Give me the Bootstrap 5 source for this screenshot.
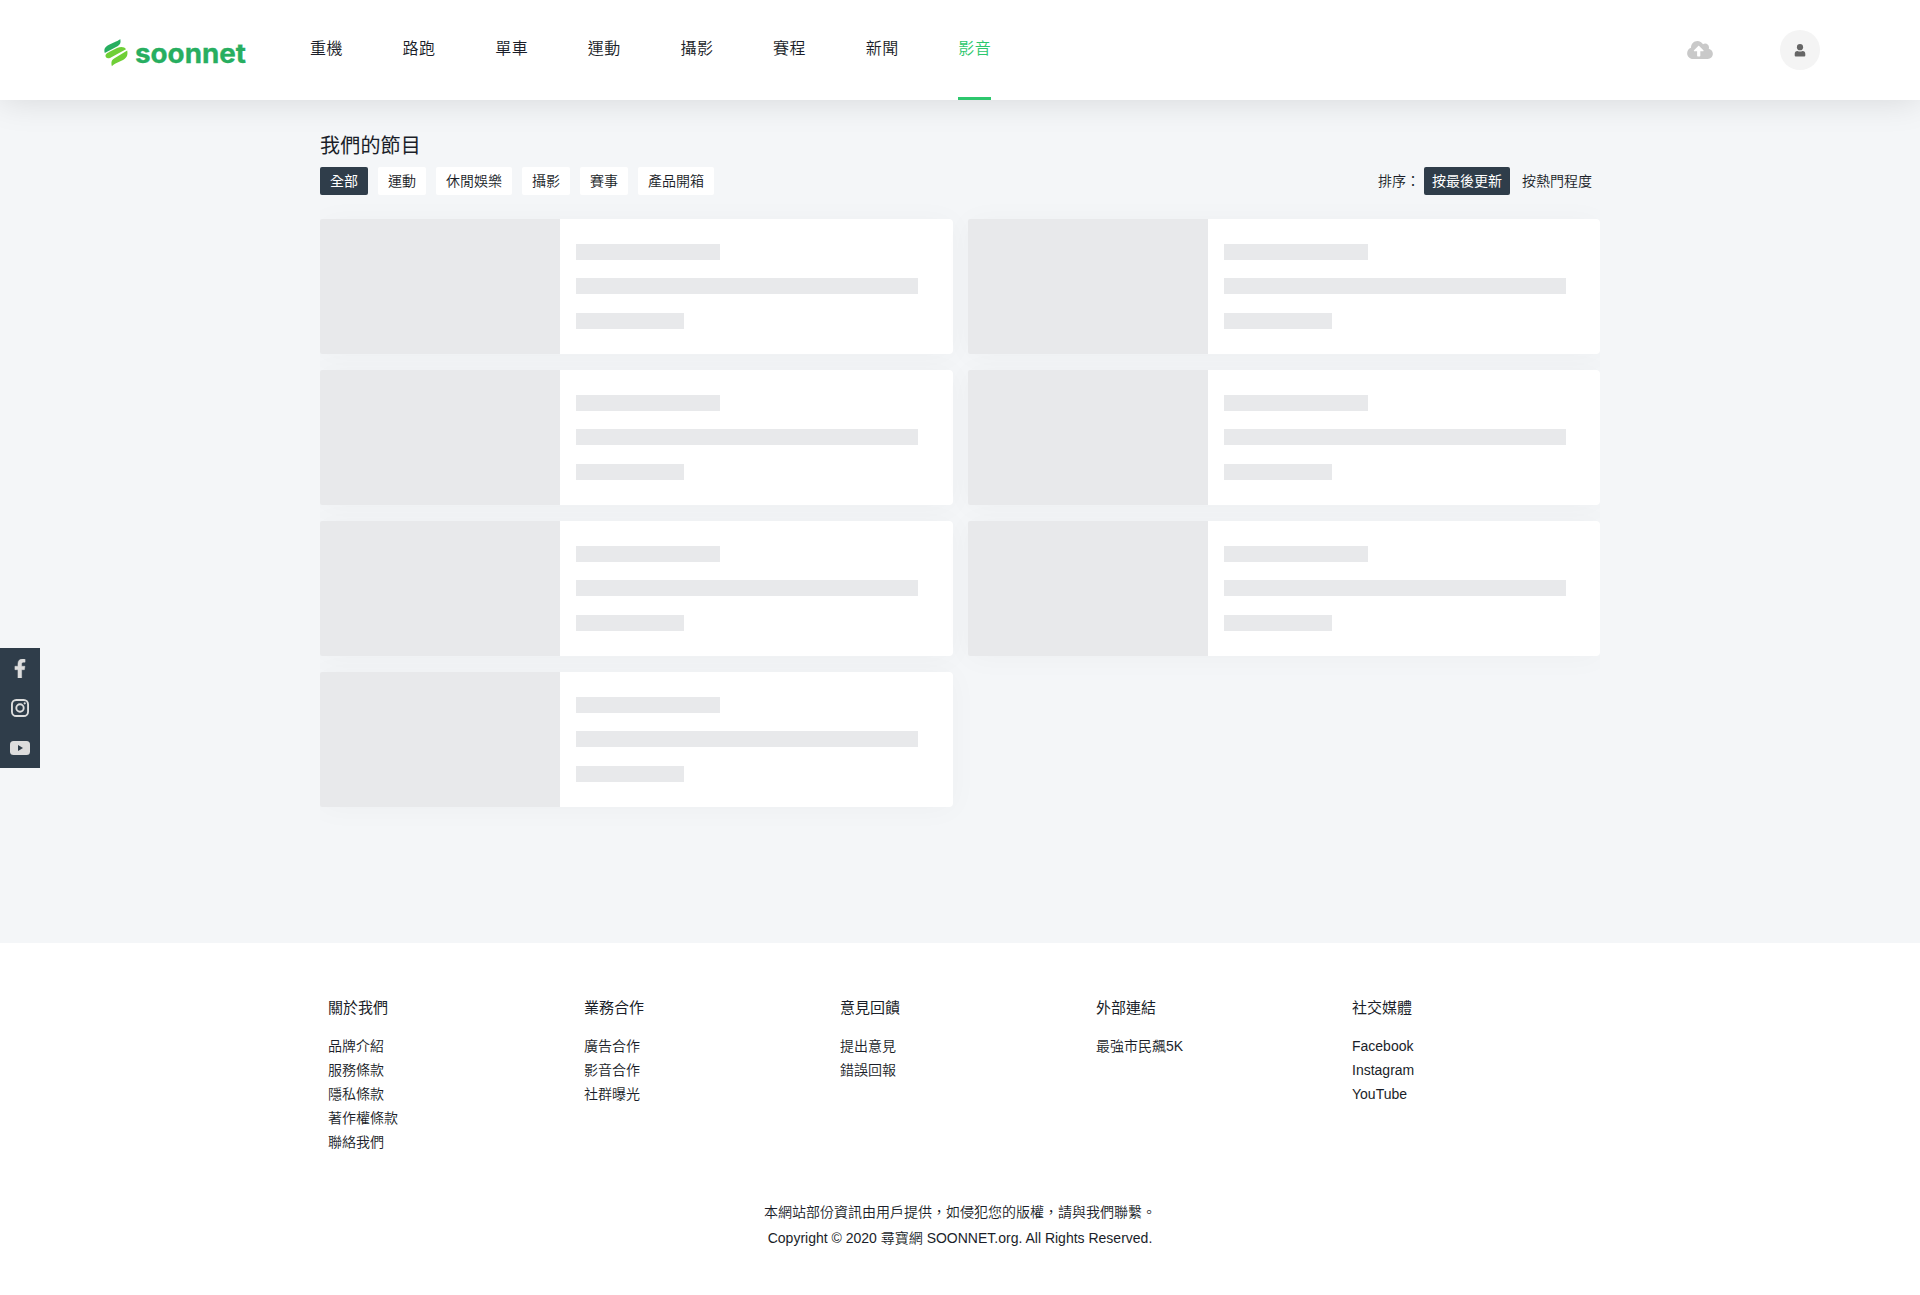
<!DOCTYPE html>
<html lang="zh-Hant">
<head>
<meta charset="utf-8">
<meta name="viewport" content="width=device-width, initial-scale=1">
<title>soonnet 影音</title>
<link href="https://cdn.jsdelivr.net/npm/bootstrap@5.3.0/dist/css/bootstrap.min.css" rel="stylesheet">
<style>
body{font-family:"Liberation Sans","Noto Sans CJK TC",sans-serif;font-size:14px;line-height:24px;color:#1a1e29;background:#f4f6f8;font-weight:350}
a{color:inherit;text-decoration:none}
.site-header{height:100px;background:#fff;box-shadow:0 0 35px rgba(0,0,0,.13);padding:0 100px 0 103px;z-index:5}
.brand-logo{width:146px;height:40px;margin-top:1px}
.main-menu{gap:59.6px;margin-left:61px;height:100px}
.main-menu .nav-link{padding:0;height:100px;line-height:98px;font-size:16px;letter-spacing:.5px;color:#1a1e29;border-bottom:3px solid transparent}
.main-menu .nav-link.active{color:#2dc76d;border-color:#2dc76d}
.header-tools{gap:67px}
.user-btn{width:40px;height:40px;background:#f4f4f4}
.wrap{width:1280px;margin:0 auto}
.show-area{min-height:843px;padding-top:31px;overflow:hidden}
.page-title{font-size:20px;line-height:30px;font-weight:400;letter-spacing:.2px;margin:0 0 6px}
.chip{height:28px;line-height:28px;padding:0 10px;background:#fff;border-radius:2px;display:block}
.chip.plain{background:transparent;padding:0 8px}
.chip.on,.chip.plain.on{background:#2f3d4a;color:#fff;font-weight:400}
.show-grid{display:grid;grid-template-columns:1fr 1fr;gap:16px 15px;padding:24px 0 60px;overflow:hidden}
.show-item{height:135px;background:#fff;border-radius:4px;box-shadow:0 2px 30px rgba(0,0,0,.03)}
.show-thumb{width:240px;background:#e8e9eb;border-radius:2px 0 0 2px}
.show-body{padding:25px 16px 0}
.bar{height:16px;background:#e8e9eb}
.bar-a{width:144px;margin-bottom:18px}.bar-b{width:342px;margin-bottom:19px}.bar-c{width:108px}
.social-rail{left:0;top:648px;width:40px;background:#2f3d4a;z-index:6}
.social-rail a{height:40px}
.site-footer{background:#fff;height:352px;padding-top:53px}
.foot-col{width:256px;padding:0 8px}
.foot-col h2{font-size:15px;line-height:24px;margin:0 0 14px;font-weight:400}
.foot-cols{height:203px}
.legal{line-height:26px}
</style>
</head>
<body>
<header class="site-header d-flex align-items-center position-relative">
  <a href="#" class="brand-logo d-block"><svg class="d-block" width="146" height="40" viewBox="0 0 146 40">
    <path fill="#27ae60" d="M17.200 8C18 11.500 17.500 13.500 14.500 15.200L1.800 22C.5 17.500 2.500 15.500 6.500 13.500L13 10.600C15 9.700 16.300 9 17.200 8Z"/>
    <path fill="#6fcf36" d="M3.200 26.500C1.500 24 3 22.500 6.500 20.700L14 17C18 15.300 21.500 15.700 23 18.300L7 26.900C5.500 27.500 4 27.400 3.200 26.500Z"/>
    <path fill="#6fcf36" d="M24.200 19.500C25.200 24.500 23.500 27.200 19.500 29.200L13 32.200C11 33.200 9.800 34 8.900 35.300C8 31.500 8.300 29 11.500 27.200Z"/>
    <text x="32" y="31.500" font-family="Inter,sans-serif" font-weight="700" font-size="26" fill="#27ae60" stroke="#27ae60" stroke-width=".3" textLength="111" lengthAdjust="spacingAndGlyphs">soonnet</text>
  </svg></a>
  <nav class="main-menu nav flex-nowrap">
    <a class="nav-link" href="#">重機</a><a class="nav-link" href="#">路跑</a><a class="nav-link" href="#">單車</a><a class="nav-link" href="#">運動</a><a class="nav-link" href="#">攝影</a><a class="nav-link" href="#">賽程</a><a class="nav-link" href="#">新聞</a><a class="nav-link active" href="#">影音</a>
  </nav>
  <div class="header-tools ms-auto d-flex align-items-center">
    <a href="#" class="d-flex"><svg width="26" height="18" viewBox="0 32 640 448" fill="#c9c9c9"><path d="M537.600 226.600c4.100-10.700 6.400-22.400 6.400-34.600 0-53-43-96-96-96-19.700 0-38.100 6-53.300 16.200C367 64.200 315.300 32 256 32c-88.400 0-160 71.600-160 160 0 2.700.1 5.400.2 8.100C40.200 219.800 0 273.200 0 336c0 79.500 64.500 144 144 144h368c70.700 0 128-57.300 128-128 0-61.900-44-113.600-102.400-125.400zM393.400 288H328v112c0 8.800-7.200 16-16 16h-48c-8.800 0-16-7.200-16-16V288h-65.400c-14.300 0-21.400-17.200-11.300-27.300l105.400-105.400c6.200-6.200 16.400-6.200 22.600 0l105.400 105.400c10.100 10.100 2.900 27.300-11.300 27.300z"/></svg></a>
    <a href="#" class="user-btn rounded-circle d-flex align-items-center justify-content-center"><svg width="12" height="13" viewBox="0 0 12 13" fill="#666"><circle cx="6" cy="3.200" r="3.100"/><path d="M.7 11.500V10Q.7 7 3.500 7Q6 8 8.500 7Q11.300 7 11.300 10V11.500Q11.300 12.500 10.300 12.500H1.700Q.7 12.500 .7 11.500Z"/></svg></a>
  </div>
</header>
<main class="show-area">
  <div class="wrap">
    <h1 class="page-title">我們的節目</h1>
    <div class="d-flex justify-content-between">
      <div class="d-flex" style="gap:10px">
        <a href="#" class="chip on">全部</a><a href="#" class="chip">運動</a><a href="#" class="chip">休閒娛樂</a><a href="#" class="chip">攝影</a><a href="#" class="chip">賽事</a><a href="#" class="chip">產品開箱</a>
      </div>
      <div class="d-flex gap-1"><span class="chip plain px-0">排序：</span><a href="#" class="chip plain on">按最後更新</a><a href="#" class="chip plain">按熱門程度</a></div>
    </div>
    <div class="show-grid">
      <div class="show-item d-flex"><div class="show-thumb"></div><div class="show-body"><div class="bar bar-a"></div><div class="bar bar-b"></div><div class="bar bar-c"></div></div></div>
      <div class="show-item d-flex"><div class="show-thumb"></div><div class="show-body"><div class="bar bar-a"></div><div class="bar bar-b"></div><div class="bar bar-c"></div></div></div>
      <div class="show-item d-flex"><div class="show-thumb"></div><div class="show-body"><div class="bar bar-a"></div><div class="bar bar-b"></div><div class="bar bar-c"></div></div></div>
      <div class="show-item d-flex"><div class="show-thumb"></div><div class="show-body"><div class="bar bar-a"></div><div class="bar bar-b"></div><div class="bar bar-c"></div></div></div>
      <div class="show-item d-flex"><div class="show-thumb"></div><div class="show-body"><div class="bar bar-a"></div><div class="bar bar-b"></div><div class="bar bar-c"></div></div></div>
      <div class="show-item d-flex"><div class="show-thumb"></div><div class="show-body"><div class="bar bar-a"></div><div class="bar bar-b"></div><div class="bar bar-c"></div></div></div>
      <div class="show-item d-flex"><div class="show-thumb"></div><div class="show-body"><div class="bar bar-a"></div><div class="bar bar-b"></div><div class="bar bar-c"></div></div></div>
    </div>
  </div>
</main>
<aside class="social-rail position-fixed">
  <a href="#" class="d-flex align-items-center justify-content-center"><svg width="12" height="19" viewBox="0 0 320 512" fill="#ddd" stroke="#ddd" stroke-width="12"><path d="M279.140 288l14.220-92.660h-88.910v-60.130c0-25.350 12.420-50.060 52.240-50.060h40.420V6.260S260.430 0 225.360 0c-73.220 0-121.080 44.380-121.080 124.720v70.620H22.890V288h81.390v224h100.170V288z"/></svg></a>
  <a href="#" class="d-flex align-items-center justify-content-center"><svg width="18" height="18" viewBox="0 0 18 18" fill="none" stroke="#ddd" stroke-width="1.900"><rect x=".95" y=".95" width="16.100" height="16.100" rx="4.300"/><circle cx="9" cy="9" r="3.700"/><circle cx="13.700" cy="4.300" r="1.100" fill="#ddd" stroke="none"/></svg></a>
  <a href="#" class="d-flex align-items-center justify-content-center"><svg width="20" height="14" viewBox="0 0 20 14"><rect width="20" height="14" rx="3.500" fill="#ddd"/><path d="M8 4l5 3-5 3z" fill="#2f3d4a"/></svg></a>
</aside>
<footer class="site-footer">
  <div class="wrap">
    <div class="foot-cols d-flex">
      <div class="foot-col"><h2>關於我們</h2><ul class="list-unstyled m-0"><li><a href="#">品牌介紹</a></li><li><a href="#">服務條款</a></li><li><a href="#">隱私條款</a></li><li><a href="#">著作權條款</a></li><li><a href="#">聯絡我們</a></li></ul></div>
      <div class="foot-col"><h2>業務合作</h2><ul class="list-unstyled m-0"><li><a href="#">廣告合作</a></li><li><a href="#">影音合作</a></li><li><a href="#">社群曝光</a></li></ul></div>
      <div class="foot-col"><h2>意見回饋</h2><ul class="list-unstyled m-0"><li><a href="#">提出意見</a></li><li><a href="#">錯誤回報</a></li></ul></div>
      <div class="foot-col"><h2>外部連結</h2><ul class="list-unstyled m-0"><li><a href="#">最強市民飆5K</a></li></ul></div>
      <div class="foot-col"><h2>社交媒體</h2><ul class="list-unstyled m-0"><li><a href="#">Facebook</a></li><li><a href="#">Instagram</a></li><li><a href="#">YouTube</a></li></ul></div>
    </div>
    <div class="legal text-center">本網站部份資訊由用戶提供，如侵犯您的版權，請與我們聯繫。<br>Copyright © 2020 尋寶網 SOONNET.org. All Rights Reserved.</div>
  </div>
</footer>
<script src="https://cdn.jsdelivr.net/npm/bootstrap@5.3.0/dist/js/bootstrap.bundle.min.js"></script>
</body>
</html>
